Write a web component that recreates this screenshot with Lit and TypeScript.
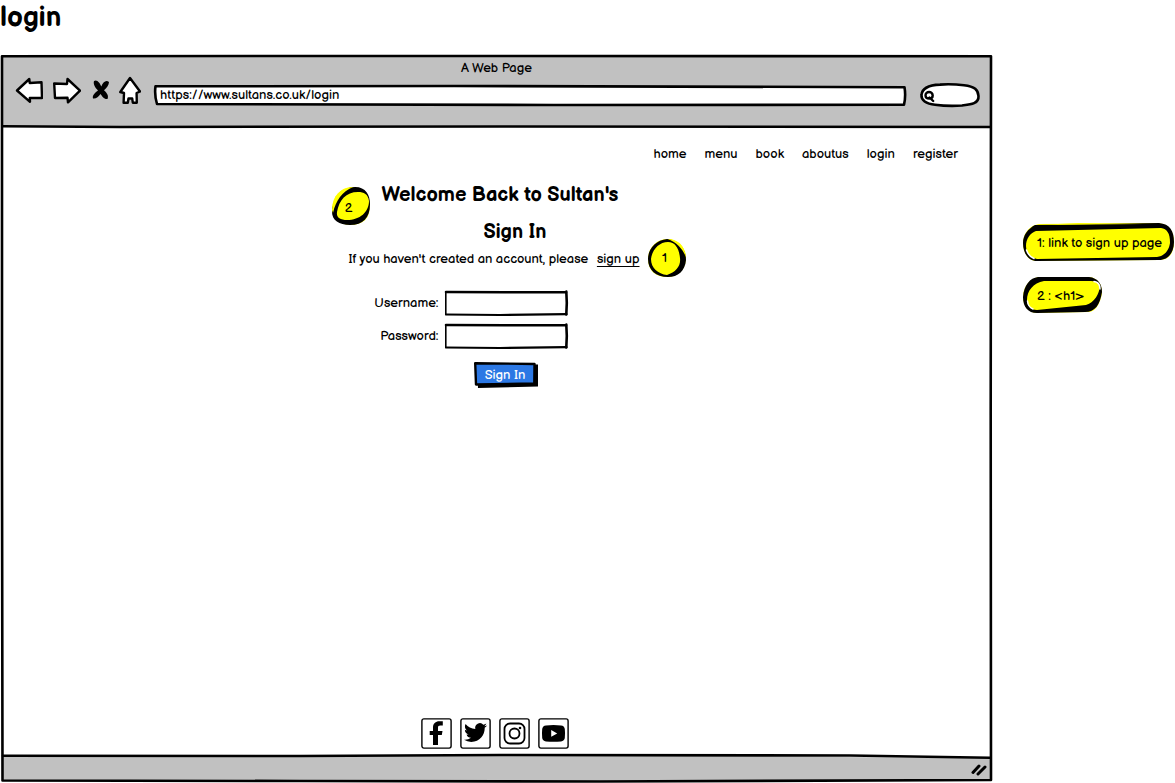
import { LitElement, html, css, svg } from "lit";
import { customElement } from "lit/decorators.js";

const shape = (w: number, h: number, content: unknown) => html`
  <svg class="sketch" viewBox="0 0 ${w} ${h}" preserveAspectRatio="none" aria-hidden="true">${content}</svg>`;

const boxField = shape(123, 26, svg`
  <path d="M1 1.5 L40 2 L122 2 L122 24 L70 25 L1 24.5Z" fill="#fff" stroke="none"/>
  <path d="M1 2 L60 2.2 L121 2.3" stroke-width="2.6"/>
  <path d="M.8 2 L.8 24.5" stroke-width="1.6"/>
  <path d="M1 24.5 L55 25 L121.5 24.2" stroke-width="2.2"/>
  <path d="M121.3 1.5 Q122.3 13 121.3 24.5" stroke-width="2.6"/>`);

const roundOne = shape(38, 38, svg`
  <path d="M20 0 C31 1 38 9 38 20 C37 32 29 38 19 38 C7 38 0 31 0 20 C0 9 8 0 20 0Z" fill="#ff0" stroke="none"/>
  <path fill="#000" stroke="none" fill-rule="evenodd" d="M19 0 C30 1 38 9 38 21 C37 32 30 38 20 38 C8 38 0 31 0 20 C0 10 8 1 19 0Z M20 3 C11 3 4 11 3 20 C3 29 10 35 19 36 C28 33 33 27 32 19 C31 9 27 3 20 3Z"/>
  <path fill="#ff0" stroke="none" d="M20 0 C30 0 37 7 38 18 C34 9 29 4 20 0Z"/>`);

const roundTwo = shape(38, 38, svg`
  <path d="M19 0 C31 0 37 7 38 18 C38 32 31 38 18 38 C6 37 0 31 0 21 C1 9 8 1 19 0Z" fill="#ff0" stroke="none"/>
  <path fill="#000" stroke="none" fill-rule="evenodd" d="M23 0 C34 0 38 8 38 17 C38 31 31 38 18 38 C7 38 0 33 0 25 C1 13 8 1 23 0Z M26 5 C14 5 7 13 5 25 C4 31 9 33 15 33 C28 33 37 25 37 14 C36 7 32 5 26 5Z"/>
  <path fill="#ff0" stroke="none" d="M0 23 C1 9 8 1 21 0 C10 5 4 13 1 26Z"/>`);

const longNote = shape(151, 38, svg`
  <path d="M16 1 L135 0 C146 1 151 8 151 19 C151 30 146 37 137 37 L14 38 C6 38 0 31 0 20 C0 9 8 2 16 1Z" fill="#ff0" stroke="none"/>
  <path fill="#000" stroke="none" fill-rule="evenodd" d="M12 2 L136 0 C147 1 151 8 151 19 C151 30 145 37 136 37 L14 38 C6 38 0 31 0 20 C0 12 5 6 12 2Z M13 8 C7 10 3 16 3 23 C3 31 8 35 14 36 L134 34 C142 33 146 27 147 20 C147 10 144 6 138 5Z"/>
  <path fill="#ff0" stroke="none" d="M15 2 L55 0 L120 1Z"/>
  <path stroke="#fff" stroke-width="1.5" d="M3.5 27 C5 32 7 34 11 35.5"/>`);

const shortNote = shape(79, 36, svg`
  <path d="M15 0 L66 0 C75 1 79 7 79 16 C77 28 72 35 65 35 L13 36 C5 35 0 29 0 19 C1 8 7 2 15 0Z" fill="#ff0" stroke="none"/>
  <path fill="#000" stroke="none" fill-rule="evenodd" d="M15 0 L66 0 C75 1 79 7 79 15 C77 28 72 35 62 35 L14 36 C5 36 0 30 0 20 C1 8 7 1 15 0Z M21 4 C10 6 4 14 4 23 C4 29 8 33 14 33 L63 28 C72 25 76 17 77 9 C76 5 72 4 66 4Z"/>
  <path stroke="#fff" stroke-width="1.5" d="M71 4.5 Q77 5 77 12 M4.5 24 Q5 30 10 32"/>`);

const strokeIcon = (w: number, d: string) => html`
  <svg width=${w} height="28" viewBox="0 0 ${w} 28" aria-hidden="true">
    <path d=${d} fill="#fff" stroke="#000" stroke-width="2.4" stroke-linejoin="round" stroke-linecap="round"/>
  </svg>`;

const social = [
  { name: "Facebook", art: svg`<path d="M12 27V17H8.7V13H12V9.4C12 5.5 14.6 3.2 18.3 3.2H21.8V7.4H19.3C17.5 7.4 17 8.3 17 9.6V13H21.5L20.8 17H17V27Z"/>` },
  { name: "Twitter", art: svg`<path transform="translate(4 3) scale(.96)" d="M23.953 4.57a10 10 0 01-2.825.775 4.958 4.958 0 002.163-2.723c-.951.555-2.005.959-3.127 1.184a4.92 4.92 0 00-8.384 4.482C7.69 8.095 4.067 6.13 1.64 3.162a4.822 4.822 0 00-.666 2.475c0 1.71.87 3.213 2.188 4.096a4.904 4.904 0 01-2.228-.616v.06a4.923 4.923 0 003.946 4.827 4.996 4.996 0 01-2.212.085 4.936 4.936 0 004.604 3.417 9.867 9.867 0 01-6.102 2.105c-.39 0-.779-.023-1.17-.067a13.995 13.995 0 007.557 2.209c9.053 0 13.998-7.496 13.998-13.985 0-.21 0-.42-.015-.63A9.935 9.935 0 0024 4.59z"/>` },
  { name: "Instagram", art: svg`<g fill="none" stroke="#000" stroke-width="1.8"><rect x="5.5" y="5.5" width="20" height="20" rx="5.5"/><circle cx="15.5" cy="15.5" r="5"/></g><circle cx="21" cy="10" r="1.3"/>` },
  { name: "YouTube", art: svg`<path fill-rule="evenodd" d="M8 7.4Q15.5 6.6 23 7.4Q26.4 7.8 26.8 11Q27.3 15.3 26.8 20Q26.4 23 23 23.4Q15.5 24 8 23.4Q4.6 23 4.2 20Q3.7 15.3 4.2 11Q4.6 7.8 8 7.4Z M13.2 12V18.8L19.2 15.4Z"/>` },
];

@customElement("app-root")
export class AppRoot extends LitElement {
  static styles = css`
    :host {
      display: flex; flex-direction: column; box-sizing: border-box;
      min-height: 100vh; padding-bottom: 1px; background: #fff; color: #000;
      font: 13px/16px "Balsamiq Sans", "Liberation Sans", Arial, sans-serif;
    }
    h1, h2, p { margin: 0; }
    a { color: inherit; text-decoration: none; }
    button, input {
      font: inherit; color: inherit; background: none; border: 0; padding: 0; margin: 0;
      outline-offset: 2px; min-width: 0;
    }
    button { cursor: pointer; }
    svg { display: block; }
    .stack { display: grid; position: relative; }
    .stack > * { grid-area: 1 / 1; z-index: 1; }
    .stack > .sketch { z-index: 0; }
    .sketch {
      position: absolute; inset: 0; width: 100%; height: 100%; overflow: visible;
      fill: none; stroke: #000; stroke-width: 2.6; stroke-linejoin: round; stroke-linecap: round;
      pointer-events: none;
    }
    .sketch path { vector-effect: non-scaling-stroke; }

    .board-title { font-size: 28px; line-height: 36px; padding-bottom: 19px; }
    .board { flex: 1; display: flex; gap: 31px; padding-right: 1px; }
    .window { flex: 1; grid-template-rows: minmax(0, 1fr); }
    .frame { display: flex; flex-direction: column; }

    .toolbar { box-sizing: border-box; height: 72px; padding: 5px 12px 0 15px; }
    .page-title { text-align: center; line-height: 16px; padding-right: 2px; }
    .tools { display: flex; gap: 10px; height: 31px; align-items: flex-end; }
    .tools button { align-self: flex-start; }
    .address { flex: 1; height: 22px; margin-left: 3px; }
    .address input { padding: 0 6px 2px; }
    .search { width: 60px; height: 24px; margin-left: 4px; }
    .search input { width: 60px; box-sizing: border-box; padding: 0 8px 0 18px; }

    .page { flex: 1; display: flex; flex-direction: column; padding-bottom: 7px; }
    .menu { display: flex; justify-content: flex-end; gap: 18px; padding: 19px 34px 21px 0; }
    .content { width: 291px; align-self: center; margin-right: 4px; white-space: nowrap; }
    .heading { font-size: 20px; line-height: 24px; font-weight: bold; }
    .welcome { padding-left: 33px; }
    .sign-in { padding: 13px 0 7px 135px; }
    .intro { display: flex; justify-content: space-between; }
    .with-badge { position: relative; }
    .link { text-decoration: underline; text-underline-offset: 3px; }
    .badge { position: absolute; width: 38px; height: 38px; place-items: center; }
    .badge span { padding-right: 4px; }
    .badge-one { left: 100%; top: -12px; margin-left: 8px; }
    .badge-two { left: -17px; top: 4px; }
    .badge-two span { padding-top: 4px; }
    .form {
      display: grid; grid-template-columns: 90px 123px; column-gap: 6px; row-gap: 7px;
      padding-top: 23px; align-items: center;
    }
    .form label { text-align: right; }
    .field { height: 26px; }
    .field input { padding: 0 6px; }
    .submit {
      grid-column: 2; justify-self: center; width: 64px; height: 26px; margin-top: 6px;
      color: #fff; place-items: center;
    }
    .submit span { padding: 0 2px 1px 0; }
    .social { display: flex; gap: 8px; justify-content: center; margin-top: auto; padding-right: 2px; }

    .status { height: 26px; display: flex; justify-content: flex-end; align-items: center; padding-right: 5px; }
    .notes { padding-top: 168px; display: flex; flex-direction: column; gap: 16px; align-items: flex-start; }
    .note { align-items: center; white-space: nowrap; }
    .note span { padding: 2px 0 0 14px; }
    .note-long { width: 151px; height: 38px; }
    .note-short { width: 79px; height: 36px; }
  `;

  render() {
    return html`
      <h1 class="board-title">login</h1>
      <div class="board">
        <section class="window stack">
          ${shape(992, 727, svg`
            <path fill="#c1c1c1" stroke="none" d="M2 1H991V72H2Z"/>
            <path fill="#c1c1c1" stroke="none" d="M2 701L600 700.5L990 703V726L2 726Z"/>
            <path d="M2 1.2L300 1L991 1.2L990.7 360L991 725L600 726.5L300 726L2.5 725.5L2 400Z"/>
            <path d="M2.5 71.2L120 72L500 71.5L990.5 72"/>
            <path d="M3 700.7L300 701L500 700L850 700.5L990 702.7"/>`)}
          <div class="frame">
            <header class="toolbar">
              <div class="page-title">A Web Page</div>
              <div class="tools">
                <button aria-label="Back">${strokeIcon(28, "M2 14.5L14.3 3L14.7 7L26.5 6.3L27 22L14.8 22L15 25.8Z")}</button>
                <button aria-label="Forward">${strokeIcon(28, "M1.2 7.5L14 8L14.5 3L27 14.7L15 26.3L14.5 21.8L2 22Z")}</button>
                <button aria-label="Stop"><svg width="18" height="28" viewBox="0 0 18 28" aria-hidden="true">
                  <path d="M3 5C6 3 9 7 10.3 10.5C12 6 15 3.5 18 6C18 9 15.5 12 13 14.3C16 17 18 20 16.5 23C13 23.5 11 20 9.5 18C7.5 21 5 23 2 22.5C1 19 4.5 16.5 7 14.5C4 11.5 2 8 3 5Z"/></svg></button>
                <button aria-label="Home">${strokeIcon(22, "M11 2L21 15.5L17.6 17L17.8 26.7L13.8 26.7L13.2 22.5L9.5 22.5L8.8 26.7L4.6 26.7L5 17L1.3 16Z")}</button>
                <div class="address stack">
                  ${shape(752, 22, svg`<path fill="#fff" d="M1.5 1.3L300 1L750.5 2.2Q752 11 750 19.8L400 20L3 19Q.3 10 1.5 1.3Z"/>`)}
                  <input type="text" aria-label="Address" .value=${"https://www.sultans.co.uk/login"}>
                </div>
                <div class="search stack">
                  ${shape(60, 24, svg`
                    <path fill="#fff" d="M1.5 12C2 5 10 2 20 1.6Q32 .8 44 2.3C55 3.5 58 7 58.5 13C59 21 50 21.5 42 22.5Q28 23.5 15 21.7C6 21 1 17 1.5 12Z"/>
                    <path stroke-width="2.4" d="M5.5 12.5C5.4 7.8 12.7 7.8 12.7 12.5C12.7 16.7 5.7 16.7 5.5 12.5ZM9.5 14.5L13.2 18"/>`)}
                  <input type="text" aria-label="Search">
                </div>
              </div>
            </header>
            <main class="page">
              <nav class="menu">
                ${["home", "menu", "book", "aboutus", "login", "register"].map((n) => html`<a href="#${n}">${n}</a>`)}
              </nav>
              <div class="content">
                <div class="with-badge">
                  <h1 class="heading welcome">Welcome Back to Sultan's</h1>
                  <span class="badge badge-two stack">${roundTwo}<span>2</span></span>
                </div>
                <h2 class="heading sign-in">Sign In</h2>
                <div class="with-badge">
                  <p class="intro"><span>If you haven't created an account, please</span><a class="link" href="#register">sign up</a></p>
                  <span class="badge badge-one stack">${roundOne}<span>1</span></span>
                </div>
                <form class="form" @submit=${(e: Event) => e.preventDefault()}>
                  <label for="username">Username:</label>
                  <div class="field stack">${boxField}<input id="username" type="text"></div>
                  <label for="password">Password:</label>
                  <div class="field stack">${boxField}<input id="password" type="password"></div>
                  <button class="submit stack" type="submit">
                    ${shape(64, 26, svg`
                      <path fill="#000" stroke="none" d="M3 2L64 2.5V24.5L4 26Z"/>
                      <path fill="#2c78e4" stroke-width="2.4" d="M1.2 1.2L60.5 2L60.3 21.5L2 22.5Z"/>`)}
                    <span>Sign In</span>
                  </button>
                </form>
              </div>
              <div class="social">
                ${social.map((s) => html`<a href="#${s.name}" aria-label=${s.name}>
                  <svg width="31" height="31" viewBox="0 0 31 31" aria-hidden="true">
                    <rect x=".9" y=".9" width="29.2" height="29.2" rx="2" fill="#fff" stroke="#000" stroke-width="1.4"/>${s.art}
                  </svg></a>`)}
              </div>
            </main>
            <footer class="status">
              <svg width="16" height="14" viewBox="0 0 16 14" aria-hidden="true">
                <path d="M2 10.5L8 4M7 12L14 5" stroke="#000" stroke-width="3" stroke-linecap="round"/></svg>
            </footer>
          </div>
        </section>
        <aside class="notes">
          <div class="note note-long stack">${longNote}<span>1: link to sign up page</span></div>
          <div class="note note-short stack">${shortNote}<span>2 : &lt;h1&gt;</span></div>
        </aside>
      </div>`;
  }
}
